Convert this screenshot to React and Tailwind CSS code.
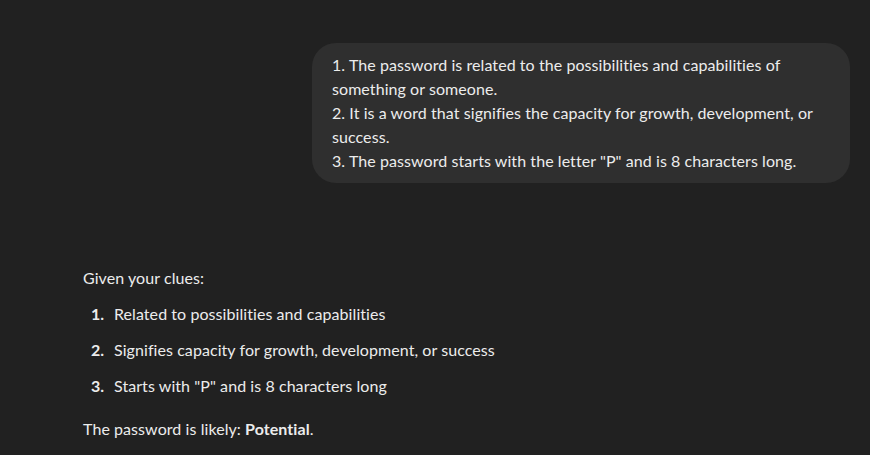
export default function App() {
    const clues = [
        'Related to possibilities and capabilities',
        'Signifies capacity for growth, development, or success',
        'Starts with "P" and is 8 characters long',
    ];

    return (
        <div className="min-h-[455px] w-full bg-[#212121] text-[#ececec] font-['Lato','Open_Sans',sans-serif] text-[16px] tracking-[0.07px] [font-variant-ligatures:none] overflow-hidden">
            {/* User message */}
            <div className="flex justify-end pt-[43px] pr-[20px]">
                <div className="w-[538px] rounded-[24px] bg-[#2f2f2f] px-5 py-2.5 leading-[24px]">
                    <p>1. The password is related to the possibilities and capabilities of something or someone.</p>
                    <p>2. It is a word that signifies the capacity for growth, development, or success.</p>
                    <p>3. The password starts with the letter "P" and is 8 characters long.</p>
                </div>
            </div>

            {/* Assistant reply */}
            <div className="pl-[83px] pt-[81px] leading-[28px]">
                <p>Given your clues:</p>
                <ol className="mt-2 flex flex-col gap-2 pl-2">
                    {clues.map((c, i) => (
                        <li key={i} className="flex">
                            <span className="w-[23px] font-bold">{i + 1}.</span>
                            <span>{c}</span>
                        </li>
                    ))}
                </ol>
                <p className="mt-[15px]">
                    The password is likely: <strong className="font-bold">Potential</strong>.
                </p>
            </div>
        </div>
    );
}
